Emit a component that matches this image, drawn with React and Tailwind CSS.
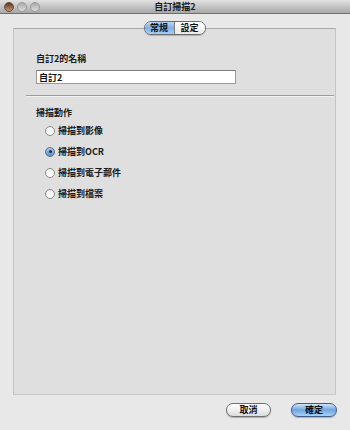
import React, { useState } from "react";

const font = { fontFamily: '"Noto Sans CJK TC", "Liberation Sans", sans-serif' };

const Radio = ({ checked, label, onClick }) => (
  <div className="flex items-center h-[21px] pl-[31px] gap-[3px] cursor-default" onClick={onClick}>
    <span
      className={
        "w-[10px] h-[10px] rounded-full border flex items-center justify-center " +
        (checked
          ? "border-[#5a6f8a] bg-gradient-to-b from-[#a9c6e8] to-[#5f8fc9]"
          : "border-[#8a8a8a] bg-gradient-to-b from-[#f0f0f0] to-[#ffffff]")
      }
    >
      {checked && <span className="w-[3px] h-[3px] rounded-full bg-[#1c2a3c]" />}
    </span>
    <span className="text-[9px] leading-[12px] font-bold text-[#1a1a1a]">{label}</span>
  </div>
);

export default function App() {
  const [name, setName] = useState("自訂2");
  const [action, setAction] = useState(1);
  const [tab, setTab] = useState(0);
  const options = ["掃描到影像", "掃描到OCR", "掃描到電子郵件", "掃描到檔案"];

  return (
    <div className="w-[350px] h-[430px] bg-[#e8e8e8] flex flex-col overflow-hidden" style={font}>
      {/* title bar */}
      <div className="h-[14px] bg-gradient-to-b from-[#e2e2e2] to-[#a8a8a8] border-b border-[#6f6f6f] flex items-center">
        <div className="flex items-center gap-[3px] pl-[4px]">
          <span className="w-[10px] h-[10px] rounded-full bg-gradient-to-b from-[#5a3a28] to-[#c89a70] border border-[#6d4a35]" />
          <span className="w-[10px] h-[10px] rounded-full bg-gradient-to-b from-[#a9a9a9] to-[#dedede] border border-[#9a9a9a]" />
          <span className="w-[10px] h-[10px] rounded-full bg-gradient-to-b from-[#a9a9a9] to-[#dedede] border border-[#9a9a9a]" />
        </div>
        <div className="flex-1 text-center text-[9px] leading-[12px] font-bold text-[#1a1a1a] pr-[40px]">自訂掃描2</div>
      </div>

      {/* panel */}
      <div className="ml-[13px] mt-[14px] w-[323px] h-[367px] bg-[#dfdfdf] border border-t-[#a8a8a8] border-l-[#c4c4c4] border-r-[#c4c4c4] border-b-[#c8c8c8] flex flex-col">
        <div className="self-center -mt-[8px] flex h-[14px] rounded-full border border-[#6c6c6c] overflow-hidden shadow-[0_1px_1px_rgba(0,0,0,0.2)]">
          {["常規", "設定"].map((t, i) => (
            <button
              key={t}
              onClick={() => setTab(i)}
              className={
                "w-[30px] text-[9px] leading-[12px] font-bold text-[#111] flex items-center justify-center " +
                (tab === i
                  ? "bg-gradient-to-b from-[#bcd6f2] via-[#7fb0e8] to-[#a8d0f6]"
                  : "bg-gradient-to-b from-[#ffffff] to-[#ebebeb]") +
                (i === 0 ? " border-r border-[#7a7a7a]" : "")
              }
            >
              {t}
            </button>
          ))}
        </div>

        <div className="pl-[22px] mt-[18px] text-[9px] leading-[12px] font-bold text-[#1a1a1a]">自訂2的名稱</div>
        <div className="pl-[22px] mt-[5px] flex">
          <input
            value={name}
            onChange={(e) => setName(e.target.value)}
            className="w-[200px] h-[14px] bg-white border border-[#9a9a9a] border-t-[#7d7d7d] px-[2px] text-[9px] leading-[12px] font-bold text-[#111] outline-none"
            style={font}
          />
        </div>

        <div className="ml-[12px] mr-[1px] mt-[11px] h-[2px] border-t border-[#9c9c9c] border-b border-b-[#f2f2f2]" />

        <div className="pl-[22px] mt-[10px] text-[9px] leading-[12px] font-bold text-[#1a1a1a]">掃描動作</div>
        <div className="mt-[1px] flex flex-col">
          {options.map((o, i) => (
            <Radio key={o} label={o} checked={action === i} onClick={() => setAction(i)} />
          ))}
        </div>
      </div>

      {/* buttons */}
      <div className="flex justify-end gap-[20px] pr-[13px] mt-[8px]">
        <button className="w-[45px] h-[14px] rounded-full border border-[#6e6e6e] bg-gradient-to-b from-[#ffffff] via-[#f0f0f0] to-[#dcdcdc] text-[9px] leading-[12px] font-bold text-[#111] shadow-[0_1px_1px_rgba(0,0,0,0.25)]">
          取消
        </button>
        <button className="w-[46px] h-[14px] rounded-full border border-[#3f5f86] bg-gradient-to-b from-[#cfe3f8] via-[#6fa6e2] to-[#a9d1f7] text-[9px] leading-[12px] font-bold text-[#111] shadow-[0_1px_1px_rgba(0,0,0,0.25)]">
          確定
        </button>
      </div>
    </div>
  );
}
